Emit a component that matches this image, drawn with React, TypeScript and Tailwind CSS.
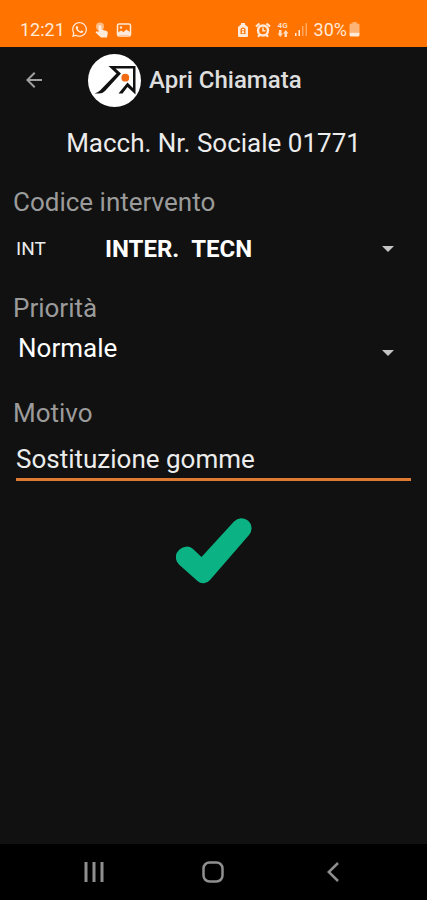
import { useState } from "react";
import type { ReactNode } from "react";
import { MdArrowBack } from "react-icons/md";
import { FaWhatsapp } from "react-icons/fa";

function TouchIcon() {
  return (
    <svg viewBox="0 0 16 16" className="h-4 w-4" fill="currentColor" aria-hidden="true">
      <circle cx="6" cy="4.500" r="4" opacity=".6" />
      <path d="M4.500 4.500A1.500 1.500 0 0 1 7.500 4.500V7.500L12.500 9Q14 9.500 13.800 11L13 15.500H7L1.500 10.500L2.500 9.300L4.500 10Z" />
    </svg>
  );
}

function PictureIcon() {
  return (
    <svg viewBox="0 0 16 16" className="h-4 w-4" fill="none" aria-hidden="true">
      <rect x="1.500" y="2" width="13" height="12" rx="1.500" stroke="currentColor" strokeWidth="1.500" />
      <path d="M2 13V10.500L5 8.500L7.500 10L10.500 7.500L14 10V13H2Z" fill="currentColor" />
      <circle cx="5" cy="5.500" r="1.200" fill="currentColor" />
    </svg>
  );
}

function BatterySaverIcon() {
  return (
    <svg viewBox="0 0 12 16" className="h-4 w-3" aria-hidden="true">
      <path
        fillRule="evenodd"
        fill="currentColor"
        d="M4 1H8V2.500L11 5V14Q11 15 10 15H2Q1 15 1 14V5L4 2.500ZM6 5.500A2.500 2.500 0 0 0 3.500 8V12H8.500V8A2.500 2.500 0 0 0 6 5.500ZM6 6.700A1.300 1.300 0 0 1 7.300 8V8.500H4.700V8A1.300 1.300 0 0 1 6 6.700Z"
      />
      <circle cx="6" cy="10.200" r="1.200" fill="currentColor" />
    </svg>
  );
}

function AlarmIcon() {
  return (
    <svg viewBox="0 0 16 16" className="h-4 w-4" fill="none" stroke="currentColor" aria-hidden="true">
      <circle cx="8" cy="8.500" r="5" strokeWidth="2.400" />
      <path d="M8 5.500V8.800H10.500" strokeWidth="1.500" />
      <path d="M1 4.500L4.500 1.500M15 4.500L11.500 1.500M3 14.800L4.800 12.800M13 14.800L11.200 12.800" strokeWidth="2.200" />
    </svg>
  );
}

function NetworkIcon() {
  return (
    <div className="flex w-3 flex-col items-center opacity-90">
      <span className="text-[8px] leading-[8px] font-bold">4G</span>
      <svg viewBox="0 0 12 8" className="h-2 w-3" fill="currentColor" aria-hidden="true">
        <path d="M2 0H4.500V3.500H6L3.300 7L.5 3.500H2ZM7.500 7V3.500H6L8.800 0L11.500 3.500H10V7Z" />
      </svg>
    </div>
  );
}

function SignalIcon() {
  return (
    <svg viewBox="0 0 13 15" className="h-[15px] w-[13px]" fill="currentColor" aria-hidden="true">
      <rect x="0" y="11" width="1.500" height="3" />
      <rect x="3.500" y="8" width="1.500" height="6" />
      <rect x="7" y="4" width="1.500" height="10" opacity=".45" />
      <rect x="10.500" y="1" width="1.500" height="13" opacity=".45" />
    </svg>
  );
}

function BatteryIcon() {
  return (
    <svg viewBox="0 0 11 15" className="h-[15px] w-[11px]" fill="currentColor" aria-hidden="true">
      <path d="M3.500 0H7.500V1.500H9Q10.500 1.500 10.500 3V10.500H.5V3Q.5 1.500 2 1.500H3.500Z" opacity=".55" />
      <path d="M.5 10.500H10.500V13Q10.500 14.500 9 14.500H2Q.5 14.500 .5 13Z" />
    </svg>
  );
}

function Logo() {
  return (
    <svg viewBox="0 0 53 53" className="h-[53px] w-[53px]" aria-hidden="true">
      <circle cx="26.500" cy="26.500" r="26.500" fill="#fff" />
      <path
        d="M20.500 12H47.500V40.500L39.500 33L34.500 39.500H30.500L39.500 28.500L45 34V14.500H27.500L33 19.500L17 37Q14.500 39.500 11 39.500H6.500Q10 38.500 12 36.500L28.500 19.500Z"
        fill="#111"
      />
      <circle cx="37.300" cy="23.700" r="3.900" fill="#f26a13" />
    </svg>
  );
}

function DropDown({
  id,
  className,
  arrow,
  children,
}: {
  id: string;
  className: string;
  arrow: string;
  children: ReactNode;
}) {
  return (
    <div className="grid flex-1 items-center">
      <select
        id={id}
        className={`col-start-1 row-start-1 w-full cursor-pointer appearance-none bg-transparent pr-10 text-white outline-none ${className}`}
      >
        {children}
      </select>
      <svg
        viewBox="0 0 12 6"
        className={`pointer-events-none col-start-1 row-start-1 mr-5 h-[6px] w-3 justify-self-end text-[#c4c4c4] ${arrow}`}
        aria-hidden="true"
      >
        <path d="M0 0H12L6 6Z" fill="currentColor" />
      </svg>
    </div>
  );
}

const labelClass = "block text-[26px] leading-9 text-[#9b9b9b]";

export default function App() {
  const [reason, setReason] = useState("Sostituzione gomme");

  return (
    <div className="flex min-h-screen flex-col bg-[#111111] font-[Roboto,sans-serif] text-[#ececec]">
      <div className="flex h-[47px] items-center justify-between bg-[#ff7300] pt-3 pr-[67px] pl-5 text-[#ffe9d8]">
        <div className="flex items-center gap-1.5">
          <span className="text-[18px] leading-5">12:21</span>
          <FaWhatsapp className="h-[17px] w-[17px]" />
          <TouchIcon />
          <PictureIcon />
        </div>
        <div className="flex items-center gap-1.5">
          <BatterySaverIcon />
          <AlarmIcon />
          <NetworkIcon />
          <SignalIcon />
          <div className="flex items-center gap-0.5">
            <span className="text-[18px] leading-5">30%</span>
            <BatteryIcon />
          </div>
        </div>
      </div>

      <header className="flex h-[66px] items-center px-[22px]">
        <button type="button" aria-label="Indietro" className="mr-[42px] text-[#a0a0a0]">
          <MdArrowBack className="h-6 w-6" />
        </button>
        <Logo />
        <h1 className="ml-2 text-[24px] leading-8 font-medium text-[#dedede]">Apri Chiamata</h1>
      </header>

      <main className="flex flex-1 flex-col px-[13px]">
        <h2 className="mt-3 text-center text-[26px] leading-9">Macch. Nr. Sociale 01771</h2>

        <label htmlFor="code" className={`mt-[23px] ${labelClass}`}>
          Codice intervento
        </label>
        <div className="flex h-[58px] items-center pl-[3px]">
          <span className="w-[89px] text-[19px] leading-6">INT</span>
          <DropDown id="code" className="text-[24px] leading-8 font-bold" arrow="">
            <option>{"INTER.\u00a0\u00a0TECN"}</option>
          </DropDown>
        </div>

        <label htmlFor="priority" className={`mt-3 ${labelClass}`}>
          Priorità
        </label>
        <div className="flex h-11 items-center pl-[5px]">
          <DropDown id="priority" className="text-[26px] leading-9" arrow="mt-2.5">
            <option>Normale</option>
          </DropDown>
        </div>

        <label htmlFor="reason" className={`mt-[25px] ${labelClass}`}>
          Motivo
        </label>
        <div className="mt-2 px-[3px]">
          <input
            id="reason"
            type="text"
            value={reason}
            onChange={(event) => setReason(event.target.value)}
            className="block h-[42px] w-full border-b-[3px] border-[#e07a32] bg-transparent text-[26px] leading-9 outline-none"
          />
        </div>

        <button type="button" aria-label="Conferma" className="mt-9 self-center">
          <svg viewBox="0 0 76 67" className="h-[67px] w-[76px]" aria-hidden="true">
            <path
              d="M3 33A10 10 0 0 1 17 32L25.500 40L58 4.500A10 10 0 0 1 73 18L34 63A8.500 8.500 0 0 1 21.500 64L3.500 48A10 10 0 0 1 3 33Z"
              fill="#0bb283"
            />
          </svg>
        </button>
      </main>

      <nav className="grid h-14 grid-cols-3 items-center justify-items-center bg-black px-[34px] text-[#8f8f8f]">
        <button type="button" aria-label="Recenti">
          <svg viewBox="0 0 20 20" className="h-5 w-5" fill="currentColor" aria-hidden="true">
            <rect x="0.500" width="3" height="20" />
            <rect x="8.500" width="3" height="20" />
            <rect x="16.500" width="3" height="20" />
          </svg>
        </button>
        <button type="button" aria-label="Home">
          <svg viewBox="0 0 22 22" className="h-[22px] w-[22px]" fill="none" aria-hidden="true">
            <rect x="1.500" y="1.500" width="19" height="19" rx="6" stroke="currentColor" strokeWidth="2.500" />
          </svg>
        </button>
        <button type="button" aria-label="Indietro">
          <svg viewBox="0 0 12 20" className="h-5 w-3" fill="none" aria-hidden="true">
            <path d="M11 1L1.800 10L11 19" stroke="currentColor" strokeWidth="2.500" />
          </svg>
        </button>
      </nav>
    </div>
  );
}
